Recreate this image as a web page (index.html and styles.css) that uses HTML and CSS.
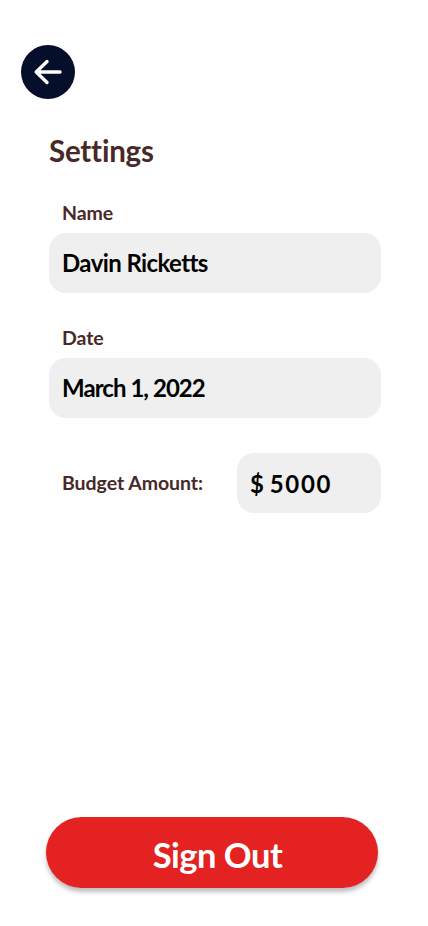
FILE: index.html
```html
<!DOCTYPE html>
<html lang="en">
<head>
<meta charset="utf-8">
<meta name="viewport" content="width=device-width, initial-scale=1">
<title>Settings</title>
<link rel="stylesheet" href="styles.css">
</head>
<body>
<main class="screen">
  <button class="back" type="button" aria-label="Back">
    <svg width="54" height="54" viewBox="0 0 54 54" fill="none" stroke="#fff" stroke-width="3.4" stroke-linecap="round" stroke-linejoin="round"><path d="M39 27H15.2M26 16.5 15.2 27 26 37.5"/></svg>
  </button>
  <section class="settings">
    <h1 class="title">Settings</h1>
    <div class="field">
      <div class="label">Name</div>
      <div class="value">Davin Ricketts</div>
    </div>
    <div class="field">
      <div class="label">Date</div>
      <div class="value day">March 1, 2022</div>
    </div>
    <div class="budget">
      <div class="label">Budget Amount:</div>
      <div class="value amount">$ 5000</div>
    </div>
  </section>
  <button class="sign-out" type="button">Sign Out</button>
</main>
</body>
</html>
```
FILE: styles.css
```css
* { box-sizing: border-box; }
body { margin: 0; background: #fff; font-family: Lato, "Open Sans", sans-serif; font-variant-ligatures: none; }
.screen { display: flex; flex-direction: column; width: 428px; height: 926px; padding: 45px 47px 38px 21px; }
button { border: 0; padding: 0; font: inherit; }
.back { width: 54px; height: 54px; border-radius: 50%; background: #050f2c; }
.back svg { display: block; }
.settings { margin: 34px 0 0 28px; width: 332px; color: #472a27; white-space: nowrap; }
.title { margin: 0 0 32px; font-size: 29.5px; line-height: 36px; font-weight: 700; letter-spacing: -0.2px; }
.field { margin-bottom: 33px; }
.label { height: 32px; padding-left: 13px; font-size: 19.5px; line-height: 24px; font-weight: 700; letter-spacing: -0.05px; }
.value { display: flex; align-items: center; height: 60px; padding: 0 0 1px 13px; border-radius: 17px; background: #efefef; color: #000; font-size: 24px; font-weight: 700; letter-spacing: -0.6px; }
.day { letter-spacing: -0.95px; }
.budget { display: flex; justify-content: space-between; align-items: center; margin-top: 35px; }
.budget .label { height: 24px; }
.amount { width: 144px; padding-bottom: 0; letter-spacing: 1.7px; word-spacing: -3.5px; }
.sign-out { width: 332px; height: 71px; margin: auto 0 0 25px; padding: 5px 0 0 11px; border-radius: 36px; background: #e42222; box-shadow: 0 4px 4px rgba(0,0,0,.25); color: #fff; font-size: 34.5px; line-height: 42px; font-weight: 700; letter-spacing: -0.5px; white-space: nowrap; }
```
